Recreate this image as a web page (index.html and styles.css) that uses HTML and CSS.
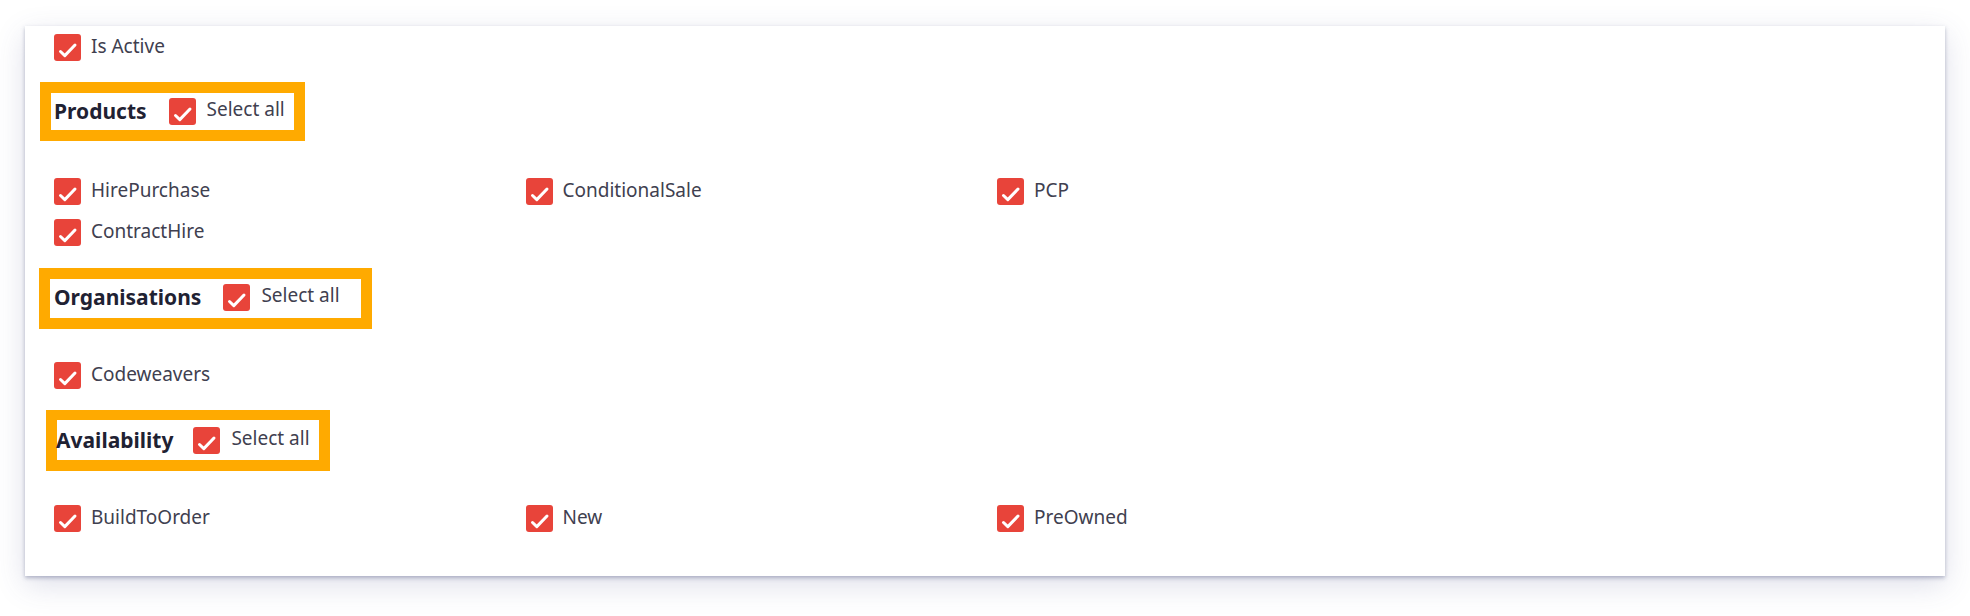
FILE: index.html
```html
<!DOCTYPE html>
<html>
<head>
<meta charset="utf-8">
<link rel="stylesheet" href="styles.css">
</head>
<body>
<div class="card">
  <label class="item item-active"><span class="cb"><svg viewBox="0 0 27 27"><path d="M6.5 17.5 L10.8 21.6 L21 11" /></svg></span><span class="txt">Is Active</span></label>

  <div class="group-head head-products">
    <span class="head-title">Products</span>
    <label class="item"><span class="cb"><svg viewBox="0 0 27 27"><path d="M6.5 17.5 L10.8 21.6 L21 11" /></svg></span><span class="txt sel">Select all</span></label>
  </div>
  <div class="grid grid-products">
    <label class="item"><span class="cb"><svg viewBox="0 0 27 27"><path d="M6.5 17.5 L10.8 21.6 L21 11" /></svg></span><span class="txt">HirePurchase</span></label>
    <label class="item"><span class="cb"><svg viewBox="0 0 27 27"><path d="M6.5 17.5 L10.8 21.6 L21 11" /></svg></span><span class="txt">ConditionalSale</span></label>
    <label class="item"><span class="cb"><svg viewBox="0 0 27 27"><path d="M6.5 17.5 L10.8 21.6 L21 11" /></svg></span><span class="txt">PCP</span></label>
    <div></div>
    <label class="item"><span class="cb"><svg viewBox="0 0 27 27"><path d="M6.5 17.5 L10.8 21.6 L21 11" /></svg></span><span class="txt">ContractHire</span></label>
  </div>

  <div class="group-head head-orgs">
    <span class="head-title">Organisations</span>
    <label class="item"><span class="cb"><svg viewBox="0 0 27 27"><path d="M6.5 17.5 L10.8 21.6 L21 11" /></svg></span><span class="txt sel">Select all</span></label>
  </div>
  <div class="grid grid-orgs">
    <label class="item"><span class="cb"><svg viewBox="0 0 27 27"><path d="M6.5 17.5 L10.8 21.6 L21 11" /></svg></span><span class="txt">Codeweavers</span></label>
  </div>

  <div class="group-head head-avail">
    <span class="head-title">Availability</span>
    <label class="item"><span class="cb"><svg viewBox="0 0 27 27"><path d="M6.5 17.5 L10.8 21.6 L21 11" /></svg></span><span class="txt sel">Select all</span></label>
  </div>
  <div class="grid grid-avail">
    <label class="item"><span class="cb"><svg viewBox="0 0 27 27"><path d="M6.5 17.5 L10.8 21.6 L21 11" /></svg></span><span class="txt">BuildToOrder</span></label>
    <label class="item"><span class="cb"><svg viewBox="0 0 27 27"><path d="M6.5 17.5 L10.8 21.6 L21 11" /></svg></span><span class="txt">New</span></label>
    <label class="item"><span class="cb"><svg viewBox="0 0 27 27"><path d="M6.5 17.5 L10.8 21.6 L21 11" /></svg></span><span class="txt">PreOwned</span></label>
  </div>
</div>
</body>
</html>
```

FILE: styles.css
```css
* { box-sizing: border-box; }
html, body { margin: 0; padding: 0; background: #ffffff; }
body {
  min-height: 616px;
  padding: 26px 25px 40px 25px;
  font-family: "Noto Sans", "Open Sans", sans-serif;
  color: #40404f;
}
.card {
  height: 550px;
  background: #ffffff;
  box-shadow: 0 2px 4px rgba(70, 80, 120, 0.38), 0 9px 28px rgba(70, 80, 140, 0.18);
  padding: 8px 17px 0 17px;
  display: flex;
  flex-direction: column;
  align-items: flex-start;
}
.item-active { margin-left: 12px; }
.item {
  display: flex;
  align-items: center;
  height: 27px;
  font-size: 19px;
}
.grid .item { margin-left: 12px; }
.cb {
  width: 27px;
  height: 27px;
  flex: 0 0 27px;
  background: #e8443a;
  border-radius: 3px;
  display: flex;
}
.cb svg { width: 27px; height: 27px; }
.cb path {
  fill: none;
  stroke: #ffffff;
  stroke-width: 3;
  stroke-linecap: round;
  stroke-linejoin: round;
}
.txt { margin-left: 10px; padding-bottom: 3px; white-space: nowrap; }
.txt.sel { margin-left: 11px; padding-bottom: 5px; }

.group-head {
  display: flex;
  align-items: center;
  border: 11px solid #ffaa00;
  background: #ffffff;
}
.head-title {
  font-weight: 700;
  font-size: 21px;
  color: #1f2233;
  margin-right: 22px;
  white-space: nowrap;
}
.head-products {
  margin: 21px 0 0 -2px;
  padding: 4px 9px 5px 3px;
}
.head-orgs {
  margin: 22px 0 0 -3px;
  padding: 4px 21px 7px 4px;
}
.head-avail {
  margin: 21px 0 0 4px;
  padding: 6px 9px 6px 0;
  border-top-width: 10px;
}
.head-avail .head-title { margin-left: -1px; margin-right: 20px; }

.grid {
  display: grid;
  grid-template-columns: repeat(4, 1fr);
  row-gap: 14px;
  width: 100%;
}
.grid-products { margin-top: 37px; }
.grid-orgs { margin-top: 33px; }
.grid-avail { margin-top: 34px; }
```
